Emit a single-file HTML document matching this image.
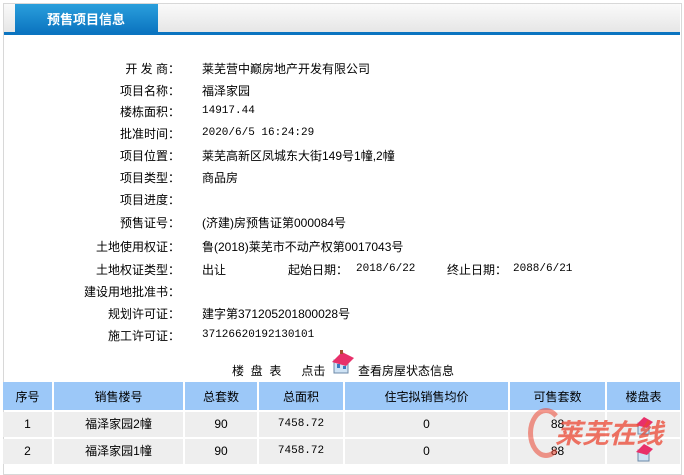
<!DOCTYPE html>
<html><head><meta charset="utf-8"><style>
body{margin:0;width:684px;height:466px;background:#fff;font-family:"Liberation Sans","Noto Sans CJK SC",sans-serif;font-size:12px;color:#000;position:relative;overflow:hidden}
.frame{position:absolute;left:3px;top:3px;width:677px;height:470px;border:1px solid #d8d8d8;}
.hdr{position:absolute;left:4px;top:4px;width:676px;height:28px;background:linear-gradient(#fafafa,#e6e6e6)}
.tab{position:absolute;left:15px;top:4px;width:143px;height:29px;background:linear-gradient(#2a9fdc,#0b74c0);color:#fff;font-weight:bold;font-size:13px;line-height:32px;text-indent:32px}
.line{position:absolute;left:4px;top:32px;width:676px;height:3px;background:#0b74c0}
.l{position:absolute;width:180px;left:0;text-align:right;white-space:nowrap}
.v{position:absolute;left:202px;white-space:nowrap}
.m{font-family:"Liberation Mono",monospace;font-size:11px}
.a{position:absolute;white-space:nowrap}
table{position:absolute;left:1px;top:380px;border-collapse:separate;border-spacing:2px;width:681px}
td{text-align:center;height:25px;padding:0;line-height:25px}
th{background:#9cc8f8;font-weight:normal;height:28px;padding:0}
tr.r td{background:#eeeeee}
</style></head><body>
<div class="frame"></div>
<div class="hdr"></div>
<div class="tab">预售项目信息</div>
<div class="line"></div>
<div class="l" style="top:60px">开&nbsp;发&nbsp;商：</div><div class="v" style="top:60px">莱芜营中巅房地产开发有限公司</div>
<div class="l" style="top:82px">项目名称：</div><div class="v" style="top:82px">福泽家园</div>
<div class="l" style="top:103px">楼栋面积：</div><div class="v m" style="top:105px">14917.44</div>
<div class="l" style="top:125px">批准时间：</div><div class="v m" style="top:127px">2020/6/5 16:24:29</div>
<div class="l" style="top:147px">项目位置：</div><div class="v" style="top:147px">莱芜高新区凤城东大街149号1幢,2幢</div>
<div class="l" style="top:169px">项目类型：</div><div class="v" style="top:169px">商品房</div>
<div class="l" style="top:191px">项目进度：</div>
<div class="l" style="top:214px">预售证号：</div><div class="v" style="top:214px">(济建)房预售证第000084号</div>
<div class="l" style="top:238px">土地使用权证：</div><div class="v" style="top:238px">鲁(2018)莱芜市不动产权第0017043号</div>
<div class="l" style="top:261px">土地权证类型：</div><div class="v" style="top:261px">出让</div>
<div class="a" style="left:288px;top:261px">起始日期：</div><div class="a m" style="left:356px;top:263px">2018/6/22</div>
<div class="a" style="left:447px;top:261px">终止日期：</div><div class="a m" style="left:513px;top:263px">2088/6/21</div>
<div class="l" style="top:283px">建设用地批准书：</div>
<div class="l" style="top:305px">规划许可证：</div><div class="v" style="top:305px">建字第371205201800028号</div>
<div class="l" style="top:327px">施工许可证：</div><div class="v m" style="top:329px">37126620192130101</div>
<div class="a" style="left:232px;top:362px">楼&nbsp;&nbsp;盘&nbsp;&nbsp;表&nbsp;&nbsp;&nbsp;&nbsp;&nbsp;&nbsp;点击</div>
<svg class="a" style="left:330px;top:350px" width="26" height="24"><rect x="4" y="10" width="14" height="13" fill="#cfe3f5" stroke="#6c8aa8"/><polygon points="2,12 12,2 24,8 16,16" fill="#e8306a"/><rect x="7" y="14" width="3" height="4" fill="#3a78c0"/><rect x="13" y="16" width="3" height="3" fill="#3a78c0"/><rect x="10" y="0" width="3" height="4" fill="#a05030"/></svg>
<div class="a" style="left:358px;top:362px">查看房屋状态信息</div>
<table>
<tr><th style="width:49px">序号</th><th style="width:129px">销售楼号</th><th style="width:72px">总套数</th><th style="width:84px">总面积</th><th style="width:163px">住宅拟销售均价</th><th style="width:95px">可售套数</th><th>楼盘表</th></tr>
<tr class="r"><td>1</td><td>福泽家园2幢</td><td>90</td><td class="m">7458.72</td><td>0</td><td>88</td><td><svg width="20" height="20" style="vertical-align:middle"><rect x="4" y="8" width="11" height="11" fill="#cfe3f5" stroke="#6c8aa8"/><polygon points="2,10 10,2 19,7 13,13" fill="#e8306a"/></svg></td></tr>
<tr class="r"><td>2</td><td>福泽家园1幢</td><td>90</td><td class="m">7458.72</td><td>0</td><td>88</td><td><svg width="20" height="20" style="vertical-align:middle"><rect x="4" y="8" width="11" height="11" fill="#cfe3f5" stroke="#6c8aa8"/><polygon points="2,10 10,2 19,7 13,13" fill="#e8306a"/></svg></td></tr>
</table>
<div class="a" style="left:555px;top:412px;font-size:27px;font-weight:bold;font-style:italic;color:rgba(235,70,50,0.75)">莱芜在线</div>
<div class="a" style="left:528px;top:408px;width:26px;height:40px;border:5px solid rgba(235,70,50,0.55);border-radius:50%;border-right-color:transparent"></div>
</body></html>
